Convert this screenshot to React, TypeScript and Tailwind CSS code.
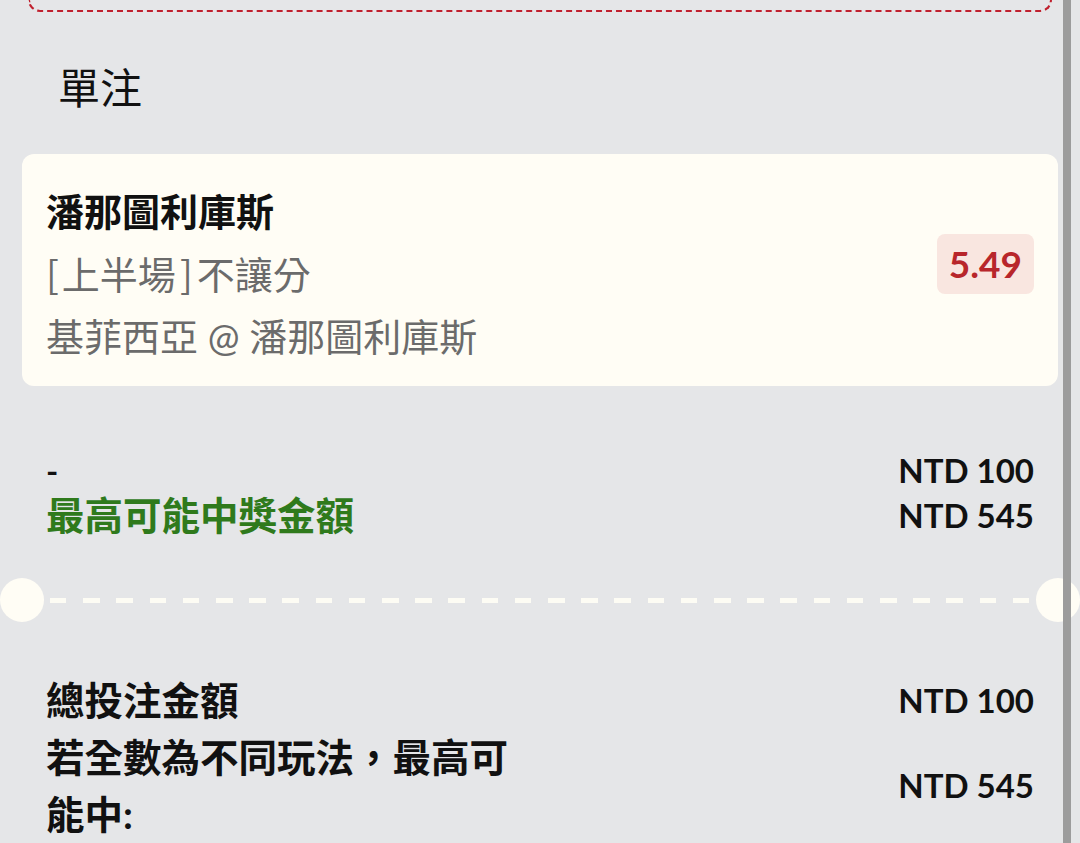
import React from "react";

const cream = "bg-[#fffdf5]";

export default function App() {
  return (
    <div className="relative h-[843px] w-full overflow-hidden bg-[#e5e6e8] font-['Lato','Noto_Sans_CJK_TC',sans-serif] text-[#111]">
      {/* bottom edge of the box above */}
      <div className="mx-[28px] h-[12px] rounded-b-[14px] border-2 border-t-0 border-dashed border-[#c0202e]" />

      <h2 className="mt-[45px] pl-[58px] text-[42px] font-normal leading-[63px]">單注</h2>

      <div className={`mx-[22px] mt-[34px] flex items-start justify-between rounded-[12px] ${cream} px-[24px] pt-[26px] pb-[19px]`}>
        <div className="text-[38px] leading-[62px]">
          <p className="font-bold">潘那圖利庫斯</p>
          <p className="text-[#6b6b6b]">
            <span className="pr-[3px] font-['Noto_Sans_CJK_TC',sans-serif]">[</span>上半場
            <span className="px-[4px] font-['Noto_Sans_CJK_TC',sans-serif]">]</span>不讓分
          </p>
          <p className="text-[#6b6b6b]">基菲西亞 @ 潘那圖利庫斯</p>
        </div>
        <div className="mt-[54px] flex h-[60px] items-center rounded-[8px] bg-[#f9e6e0] px-[12px] text-[37px] font-bold text-[#b8262b]">
          5.49
        </div>
      </div>

      <div className="mx-[22px] mt-[62px] px-[24px]">
        <div className="flex h-[45px] items-center justify-between text-[33px] font-bold">
          <span>-</span>
          <span>NTD 100</span>
        </div>
        <div className="flex h-[45px] items-center justify-between font-bold">
          <span className="text-[38.5px] text-[#2f7a1c]">最高可能中獎金額</span>
          <span className="text-[33px]">NTD 545</span>
        </div>
      </div>

      {/* ticket divider */}
      <div className="mt-[40px] flex h-[44px] items-center">
        <div className={`h-[44px] w-[44px] shrink-0 rounded-full ${cream}`} />
        <div className="mx-[6px] h-[5px] flex-1 bg-[repeating-linear-gradient(90deg,#fdfcf4_0_16.5px,transparent_16.5px_33.2px)]" />
        <div className={`h-[44px] w-[44px] shrink-0 rounded-full ${cream}`} />
      </div>

      <div className="mx-[22px] mt-[50px] px-[24px] font-bold">
        <div className="flex items-center justify-between">
          <span className="text-[38.5px] leading-[57px]">總投注金額</span>
          <span className="text-[33px]">NTD 100</span>
        </div>
        <div className="flex items-center justify-between">
          <p className="w-[480px] text-[38.5px] leading-[57px]">若全數為不同玩法，最高可能中:</p>
          <span className="text-[33px]">NTD 545</span>
        </div>
      </div>

      {/* scrollbar */}
      <div className="absolute top-0 right-[9px] bottom-0 w-[8px] bg-[#9c9c9c]" />
    </div>
  );
}
